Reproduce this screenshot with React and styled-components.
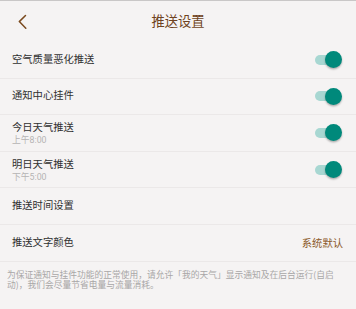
import React from "react";
import styled, { createGlobalStyle } from "styled-components";

const Global = createGlobalStyle`
  html, body { margin: 0; padding: 0; background: #f5f3f3; }
  body { font-family: "Noto Sans CJK SC", "Noto Sans", sans-serif; }
`;

const Page = styled.div`
  width: 356px;
  height: 309px;
  background: #f5f3f3;
  border-top: 1px solid #c9c7c7;
  box-sizing: border-box;
  display: flex;
  flex-direction: column;
  overflow: hidden;
`;

const Header = styled.div`
  height: 41px;
  display: grid;
  grid-template-columns: 40px 1fr 40px;
  align-items: center;
`;

const BackButton = styled.div`
  display: flex;
  align-items: center;
  justify-content: flex-start;
  padding-left: 17px;
  height: 100%;
`;

const Title = styled.div`
  text-align: center;
  font-size: 13.3px;
  color: #6e4220;
  line-height: 1;
  padding-bottom: 1px;
`;

const List = styled.div`
  display: flex;
  flex-direction: column;
`;

const Row = styled.div`
  min-height: 35.6px;
  border-bottom: 1px solid #ebe8e8;
  display: flex;
  align-items: center;
  justify-content: space-between;
  padding: 0 14px 0 12px;
`;

const Texts = styled.div`
  display: flex;
  flex-direction: column;
  gap: 1px;
  padding-top: ${(p) => (p.$sub ? "1px" : "0")};
  font-family: "Roboto", "Noto Sans CJK SC", sans-serif;
`;

const Label = styled.div`
  font-size: 10.3px;
  line-height: 12px;
  color: #303030;
`;

const Sub = styled.div`
  font-size: 8.8px;
  line-height: 10px;
  color: #b5b3b3;
`;

const Value = styled.div`
  font-size: 10.3px;
  color: #8a5828;
  margin-right: -1px;
`;

const Switch = styled.div`
  position: relative;
  width: 28px;
  height: 17px;
  display: flex;
  align-items: center;
`;

const Track = styled.div`
  width: 24px;
  height: 10px;
  margin-left: 1px;
  border-radius: 5px;
  background: ${(p) => (p.$on ? "#a8d7d2" : "#cfcfcf")};
`;

const Thumb = styled.div`
  position: absolute;
  top: 0;
  left: ${(p) => (p.$on ? "11px" : "0")};
  width: 17px;
  height: 17px;
  border-radius: 50%;
  background: ${(p) => (p.$on ? "#00897b" : "#f0f0f0")};
  box-shadow: 0 1.5px 2px rgba(0, 0, 0, 0.28);
`;

const Note = styled.div`
  padding: 8.5px 16px 0 7px;
  font-size: 8.75px;
  line-height: 9.6px;
  color: #a9a7a7;
`;

const Toggle = ({ on }) => (
  <Switch>
    <Track $on={on} />
    <Thumb $on={on} />
  </Switch>
);

const rows = [
  { label: "空气质量恶化推送", toggle: true },
  { label: "通知中心挂件", toggle: true },
  { label: "今日天气推送", sub: "上午8:00", toggle: true },
  { label: "明日天气推送", sub: "下午5:00", toggle: true },
  { label: "推送时间设置" },
  { label: "推送文字颜色", value: "系统默认" },
];

export default function App() {
  return (
    <>
      <Global />
      <Page>
        <Header>
          <BackButton>
            <svg width="12" height="16" viewBox="0 0 12 16">
              <path
                d="M8.5 1.5 L2.3 7.6 L8.8 14.3"
                fill="none"
                stroke="#7a4a1e"
                strokeWidth="1.5"
                strokeLinecap="round"
                strokeLinejoin="round"
              />
            </svg>
          </BackButton>
          <Title>推送设置</Title>
          <div />
        </Header>
        <List>
          {rows.map((r) => (
            <Row key={r.label}>
              <Texts $sub={!!r.sub}>
                <Label>{r.label}</Label>
                {r.sub && <Sub>{r.sub}</Sub>}
              </Texts>
              {r.toggle && <Toggle on />}
              {r.value && <Value>{r.value}</Value>}
            </Row>
          ))}
        </List>
        <Note>
          为保证通知与挂件功能的正常使用，请允许「我的天气」显示通知及在后台运行(自启动)，我们会尽量节省电量与流量消耗。
        </Note>
      </Page>
    </>
  );
}
